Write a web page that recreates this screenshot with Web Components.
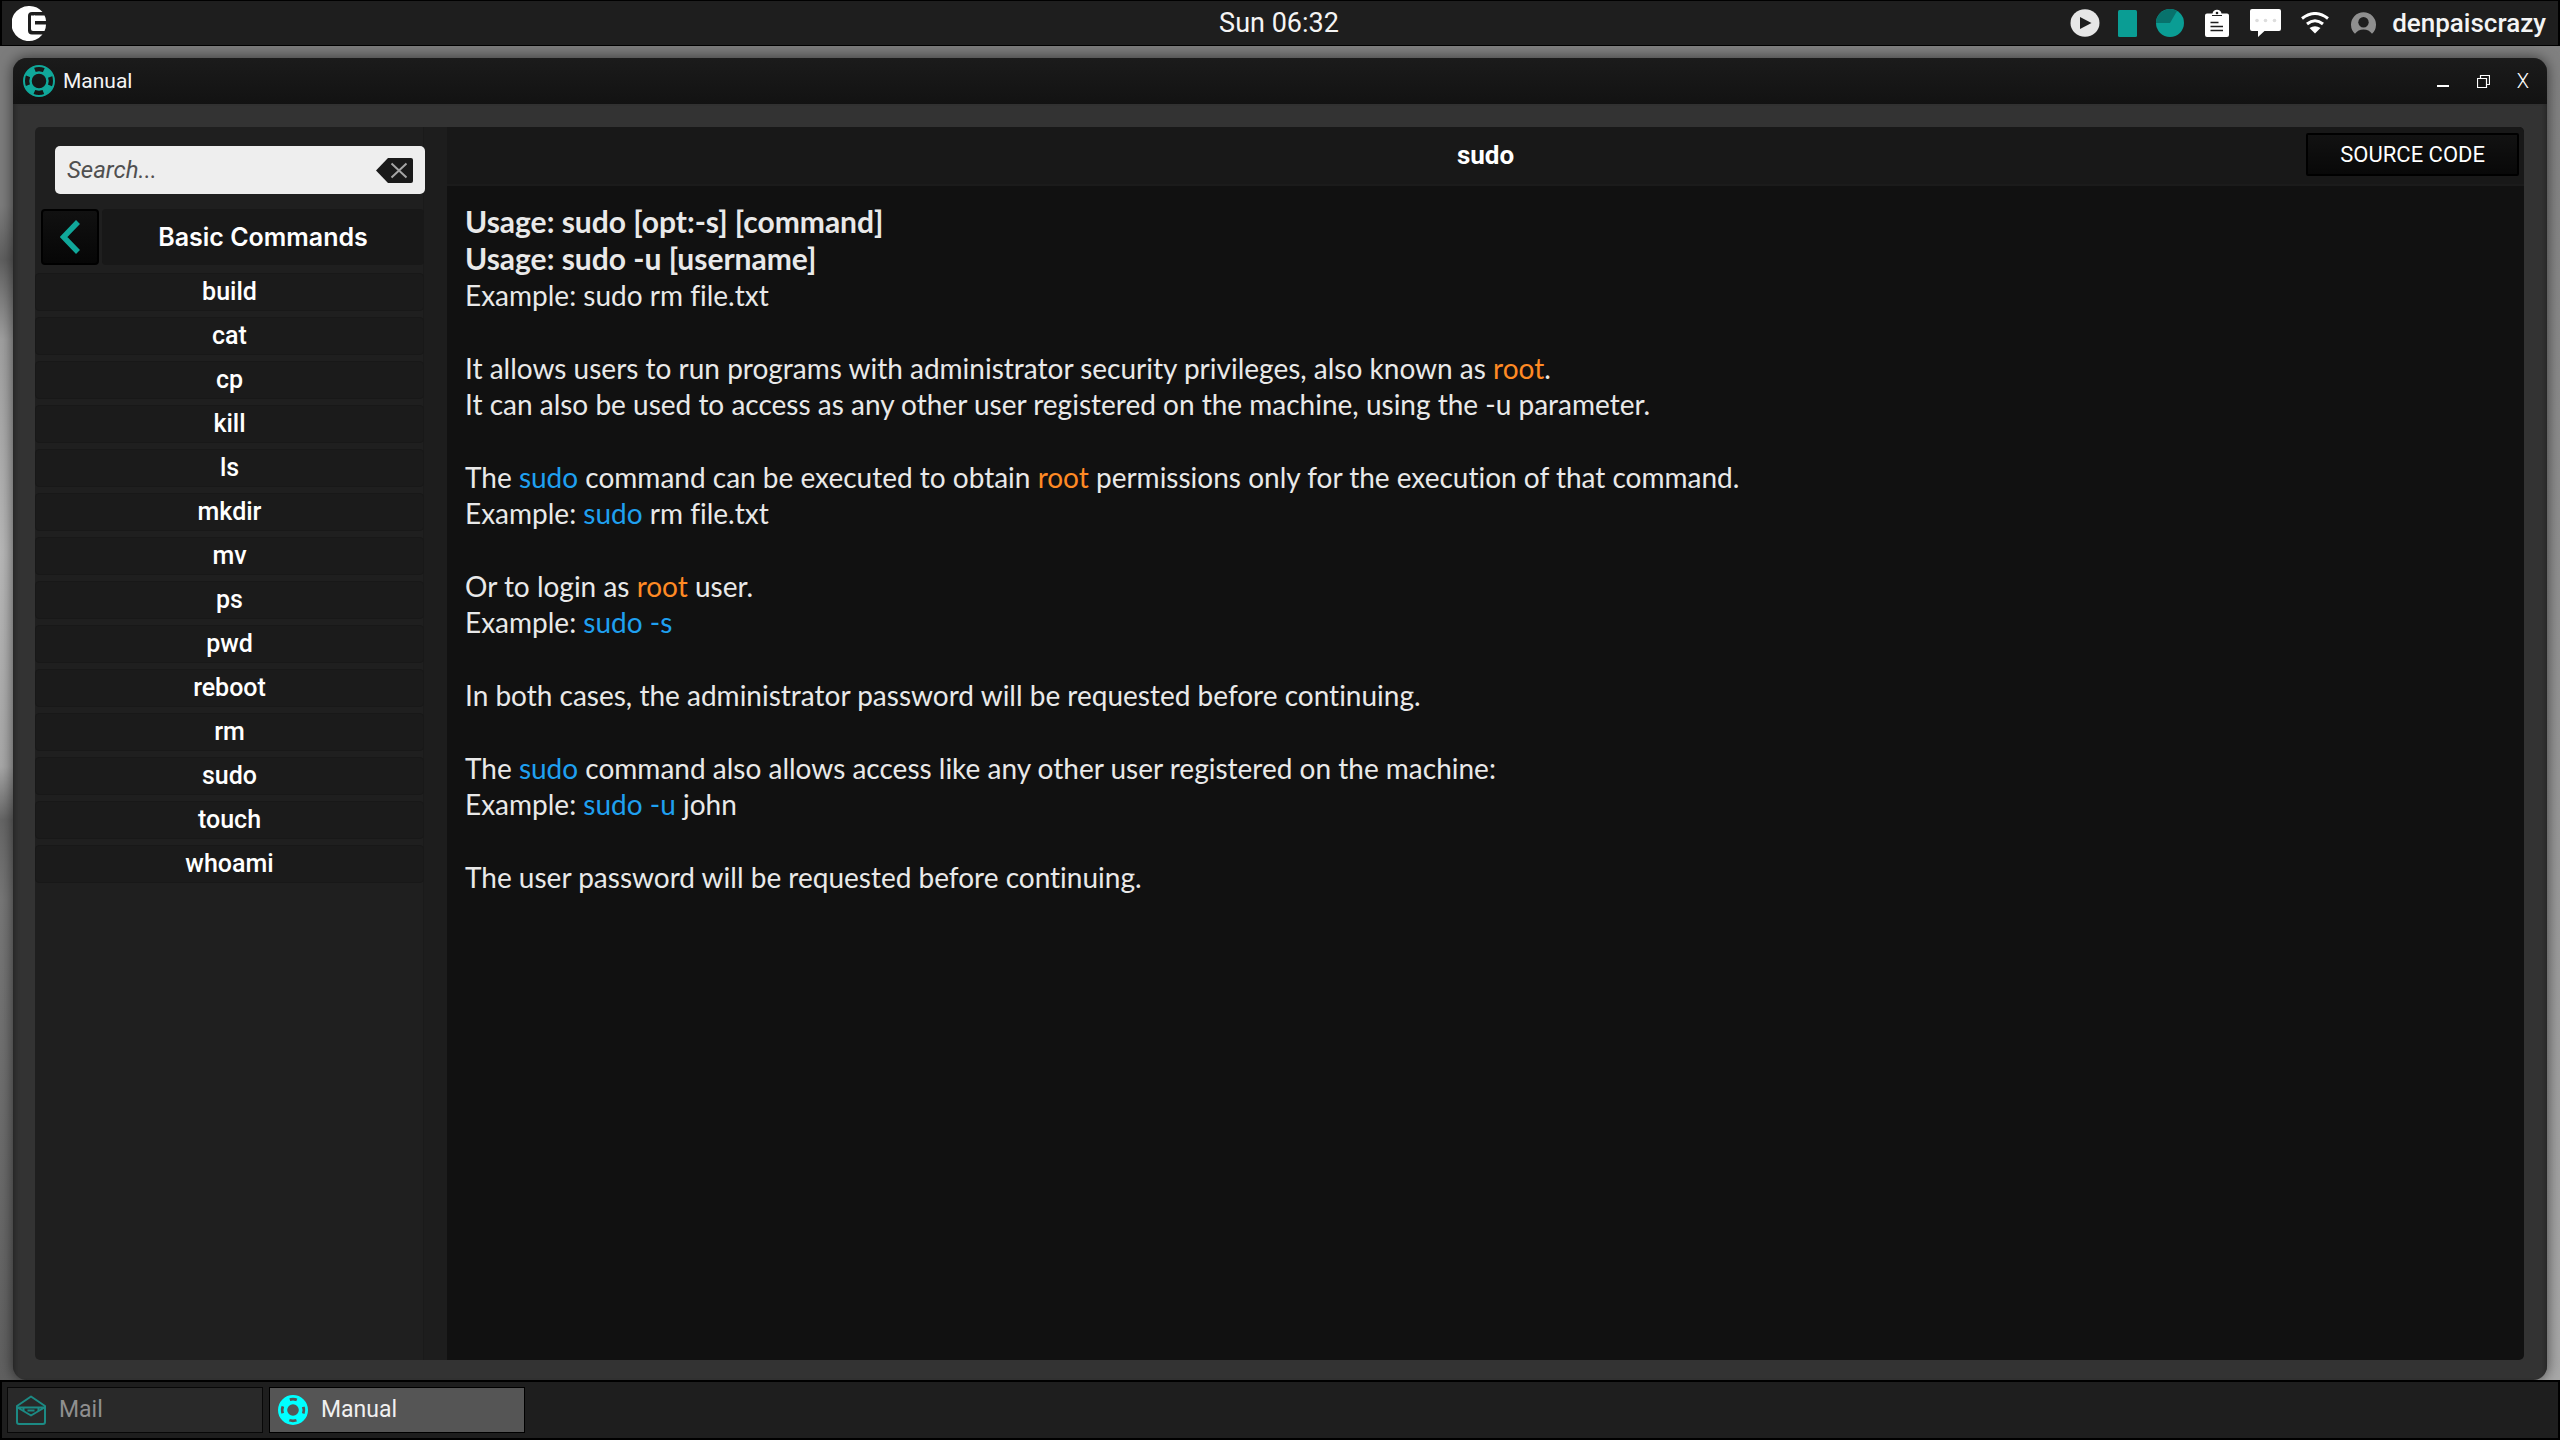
<!DOCTYPE html>
<html lang="en">
<head>
<meta charset="utf-8">
<title>Manual</title>
<style>
  html, body {
    margin: 0;
    height: 100%;
    background: #1e1e1e;
  }
  body {
    font-family: Roboto, "Open Sans", sans-serif;
    color: #f4f4f4;
  }
</style>
</head>
<body>
<os-desktop></os-desktop>

<script>
const define = (name, html, setup) => {
  const template = document.createElement('template');
  template.innerHTML = html;

  customElements.define(name, class extends HTMLElement {
    constructor() {
      super();
      this.attachShadow({ mode: 'open' });
      this.shadowRoot.appendChild(template.content.cloneNode(true));
    }

    connectedCallback() {
      if (setup) setup(this, this.shadowRoot);
    }
  });
};

// Icons, looked up by the name attribute of <os-icon>
const icons = {
  logo: `<svg viewBox="0 0 34 35">
    <path fill="#fff" fill-rule="evenodd" d="M17 0A17.500 17.500 0 1 0 30.500 28.500H20a4 4 0 0 1-4-4V10a4 4 0 0 1 4-4H30.500A17.500 17.500 0 0 0 17 0z"/>
    <path fill="#fff" d="M22 9.500h10.500q1.500 2.500 1.500 5.500H22zM22 18.500h12q0 3.500-1.500 6.500H22z"/>
    <path fill="#fff" d="M19 9.500h4v15.500h-2a2 2 0 0 1-2-2z"/>
  </svg>`,
  ring: `<svg viewBox="0 0 32 32" fill="none" stroke="currentColor">
    <circle cx="16" cy="16" r="15" stroke-width="2"/>
    <circle cx="16" cy="16" r="8.500" stroke-width="2.500"/>
    <circle cx="16" cy="16" r="11.700" stroke-width="6" stroke-dasharray="9.400 8.980" stroke-dashoffset="-4.500"/>
  </svg>`,
  ringsolid: `<svg viewBox="0 0 32 32" fill="none" stroke="currentColor">
    <circle cx="16" cy="16" r="14.500" stroke-width="3"/>
    <circle cx="16" cy="16" r="8.200" stroke-width="4"/>
    <circle cx="16" cy="16" r="11.500" stroke-width="7" stroke-dasharray="10.400 7.660" stroke-dashoffset="-3.830"/>
  </svg>`,
  mail: `<svg viewBox="0 0 30 30" fill="none" stroke="currentColor" stroke-width="2" stroke-linejoin="round">
    <path d="M1 11 15 1.500 29 11V27a2 2 0 0 1-2 2H3a2 2 0 0 1-2-2z"/>
    <path d="M1.500 12.500H28.500L15 20.500z"/>
    <path d="M7.500 13v3M22.500 13v3M11.500 15.500h7"/>
  </svg>`,
  play: `<svg viewBox="0 0 30 28"><ellipse cx="15" cy="14" rx="14.500" ry="13.700" fill="#e6e6e6"/><path fill="#1e1e1e" d="M10 8v12l11.500-6z"/></svg>`,
  battery: `<svg viewBox="0 0 19 27"><rect width="19" height="27" rx="1.500" fill="#0a9d94"/></svg>`,
  disk: `<svg viewBox="0 0 28 28"><circle cx="14" cy="14" r="14" fill="#0a9d94"/><path fill="#08726c" d="M14 14 21 1.900A14 14 0 0 0 0 14z"/></svg>`,
  clipboard: `<svg viewBox="0 0 24 28">
    <path fill="#fff" d="M2 4.500h5.500a4.600 4.600 0 0 1 9 0H22a2 2 0 0 1 2 2V26a2 2 0 0 1-2 2H2a2 2 0 0 1-2-2V6.500a2 2 0 0 1 2-2z"/>
    <path fill="#1e1e1e" d="M7 6h10v1H7z"/><circle cx="12" cy="4" r="1.300" fill="#1e1e1e"/>
    <path stroke="#1e1e1e" stroke-width="1.600" d="M5.500 13.500h8M5.500 17.500h12.500M5.500 21.500h12.500"/>
  </svg>`,
  chat: `<svg viewBox="0 0 31 28"><path fill="#fff" d="M2 0h27a2 2 0 0 1 2 2v18a2 2 0 0 1-2 2H14.500L8 28V22H2a2 2 0 0 1-2-2V2a2 2 0 0 1 2-2z"/>
    <g fill="#ddd"><circle cx="7" cy="11.500" r="1.800"/><circle cx="15.500" cy="11.500" r="1.800"/><circle cx="24.500" cy="11.500" r="1.800"/></g></svg>`,
  wifi: `<svg viewBox="0 0 28 22" fill="none" stroke="#fff" stroke-width="3">
    <path d="M1 6.500Q14-3.500 27 6.500M6 12Q14 5.500 22 12"/>
    <path fill="#fff" stroke="none" d="M8.500 16Q14 12.500 19.500 16L14 21.500z"/>
  </svg>`,
  user: `<svg viewBox="0 0 25 23">
    <path fill="#8f8f8f" d="M4 21.800A12.500 12.500 0 1 1 21 21.800Q18 17.500 12.500 17.500T4 21.800z"/>
    <circle cx="12.500" cy="10.300" r="5.200" fill="#1e1e1e"/>
  </svg>`,
  clear: `<svg viewBox="0 0 37 25"><path fill="#1a1a1a" d="M12 0H35a2 2 0 0 1 2 2V23a2 2 0 0 1-2 2H12L0 12.500z"/><path stroke="#a5a5a5" stroke-width="2" d="M15.500 5.500 30.500 19.500M30.500 5.500 15.500 19.500"/></svg>`,
  back: `<svg viewBox="0 0 20 34" fill="none" stroke="#10a89a" stroke-width="5.500"><path d="M18 2 3.500 17 18 32"/></svg>`,
  minimize: `<svg viewBox="0 0 13 13"><path fill="#fff" d="M0 10h12v2H0z"/></svg>`,
  restore: `<svg viewBox="0 0 13 13" fill="none" stroke="#fff"><path d="M.5 3.500h9v9h-9zM3.500 3V.5h9v9H10" stroke-width="1.200"/></svg>`
};

define('os-icon', `
  <style>
    :host { display: block; flex: none; }
    svg { display: block; width: 100%; height: 100%; }
  </style>
`, (el, root) => {
  root.innerHTML += icons[el.getAttribute('name')];
});

define('tray-bar', `
  <style>
    :host {
      display: grid;
      grid-template-columns: 1fr auto 1fr;
      align-items: center;
      box-sizing: border-box;
      height: 46px;
      padding: 0 12px 0 10px;
      border: solid #000;
      border-width: 1px 2px;
      background: #1e1e1e;
    }
    button {
      justify-self: start;
      padding: 0;
      border: 0;
      background: none;
    }
    time { font-size: 27px; line-height: 32px; }
    .tray { display: flex; align-items: center; justify-self: end; }
    .name { margin-left: 16px; font-size: 26px; line-height: 32px; font-weight: 500; }
    .logo { width: 34px; height: 35px; }
    .play { width: 30px; height: 28px; }
    .battery { width: 19px; height: 27px; margin-left: 18px; }
    .disk { width: 28px; height: 28px; margin-left: 19px; }
    .clipboard { width: 24px; height: 28px; margin-left: 21px; }
    .chat { width: 31px; height: 28px; margin-left: 21px; }
    .wifi { width: 28px; height: 22px; margin-left: 20px; }
    .user { width: 25px; height: 23px; margin-left: 22px; }
  </style>
  <button aria-label="Menu"><os-icon class="logo" name="logo"></os-icon></button>
  <time>Sun 06:32</time>
  <div class="tray">
    <os-icon class="play" name="play"></os-icon>
    <os-icon class="battery" name="battery"></os-icon>
    <os-icon class="disk" name="disk"></os-icon>
    <os-icon class="clipboard" name="clipboard"></os-icon>
    <os-icon class="chat" name="chat"></os-icon>
    <os-icon class="wifi" name="wifi"></os-icon>
    <os-icon class="user" name="user"></os-icon>
    <span class="name">denpaiscrazy</span>
  </div>
`);

define('app-window', `
  <style>
    :host {
      display: flex;
      flex-direction: column;
      box-sizing: border-box;
      border-radius: 14px;
      overflow: hidden;
      background: #333;
      box-shadow: 0 0 14px rgba(0, 0, 0, 0.6);
    }
    header {
      display: flex;
      align-items: center;
      height: 46px;
      padding: 0 18px 0 10px;
      background: linear-gradient(#1b1b1b, #121212);
    }
    .ring { width: 32px; height: 32px; margin-right: 8px; color: #10a89a; }
    h1 { flex: 1; margin: 0; font-size: 21px; line-height: 28px; font-weight: 400; }
    .controls { display: flex; align-items: center; gap: 27px; }
    button {
      padding: 0;
      border: 0;
      background: none;
      color: #fff;
      font: 300 20px/24px Roboto, sans-serif;
    }
    .controls os-icon { width: 13px; height: 13px; }
    .body {
      display: flex;
      flex: 1;
      min-height: 0;
      padding: 23px 23px 20px 22px;
      box-shadow: inset 5px 0 4px -3px #262626, inset -5px 0 4px -3px #262626;
    }
    ::slotted(*) { flex: 1; }
  </style>
  <header>
    <os-icon class="ring" name="ring"></os-icon>
    <h1><slot name="title"></slot></h1>
    <div class="controls">
      <button aria-label="Minimize"><os-icon name="minimize"></os-icon></button>
      <button aria-label="Restore"><os-icon name="restore"></os-icon></button>
      <button aria-label="Close">X</button>
    </div>
  </header>
  <div class="body"><slot></slot></div>
`);

define('command-list', `
  <style>
    :host { display: block; }
    ul {
      display: flex;
      flex-direction: column;
      gap: 6px;
      margin: 0;
      padding: 0;
      list-style: none;
    }
    a {
      display: block;
      padding: 3px 0;
      border: 1px solid #181818;
      border-radius: 4px;
      background: #1b1b1b;
      color: #fff;
      font-size: 25px;
      line-height: 30px;
      font-weight: 500;
      text-align: center;
      text-decoration: none;
    }
  </style>
  <ul></ul>
`, (el, root) => {
  const list = root.querySelector('ul');
  el.getAttribute('commands').split(' ').forEach((command) => {
    const item = document.createElement('li');
    item.innerHTML = `<a href="#${command}">${command}</a>`;
    list.appendChild(item);
  });
});

define('manual-sidebar', `
  <style>
    :host {
      display: flex;
      flex-direction: column;
      box-sizing: border-box;
      padding-right: 23px;
      background: linear-gradient(to left, #1d1d1d 23px, #1a1a1a 23px, #1a1a1a 24px, #1f1f1f 24px);
    }
    .search {
      display: flex;
      align-items: center;
      height: 48px;
      margin: 19px -1px 0 20px;
      padding: 0 12px;
      box-sizing: border-box;
      border-radius: 5px;
      background: #eee;
    }
    input {
      flex: 1;
      min-width: 0;
      padding: 0;
      border: 0;
      outline: 0;
      background: none;
      color: #222;
      font: italic 24px/30px Roboto, sans-serif;
    }
    input::placeholder { color: #505050; opacity: 1; }
    button { padding: 0; border: 0; background: none; }
    .clear { width: 37px; height: 25px; }
    .heading {
      display: flex;
      gap: 3px;
      margin: 15px 0 0 6px;
    }
    .heading button {
      display: grid;
      place-items: center;
      width: 58px;
      height: 56px;
      box-sizing: border-box;
      border: 2px solid #000;
      border-radius: 4px;
      background: linear-gradient(#111, #060606);
    }
    .back { width: 20px; height: 34px; }
    h2 {
      flex: 1;
      margin: 0;
      border-radius: 4px;
      background: #181818;
      color: #fff;
      font: 600 25px/56px Inter, sans-serif;
      text-align: center;
    }
    command-list { margin-top: 8px; }
  </style>
  <div class="search">
    <input type="text" placeholder="Search..." aria-label="Search">
    <button aria-label="Clear"><os-icon class="clear" name="clear"></os-icon></button>
  </div>
  <div class="heading">
    <button aria-label="Back"><os-icon class="back" name="back"></os-icon></button>
    <h2>Basic Commands</h2>
  </div>
  <command-list commands="build cat cp kill ls mkdir mv ps pwd reboot rm sudo touch whoami"></command-list>
`);

define('manual-page', `
  <style>
    :host {
      display: flex;
      flex-direction: column;
      background: #111;
    }
    header {
      display: grid;
      grid-template-columns: 1fr auto 1fr;
      align-items: center;
      height: 59px;
      box-sizing: border-box;
      padding: 0 5px 2px;
      background: #181818;
      border-bottom: 2px solid #1b1b1b;
    }
    h2 { grid-column: 2; margin: 0; color: #fff; font-size: 26px; line-height: 32px; font-weight: 700; }
    button {
      justify-self: end;
      height: 43px;
      padding: 0 32px;
      border: 2px solid #000;
      border-radius: 2px;
      background: linear-gradient(#121212, #080808);
      color: #fff;
      font: 22px/28px Roboto, sans-serif;
    }
    article {
      padding: 17px 18px;
      color: #e9e9e9;
      font-family: Lato, sans-serif;
      font-size: 28px;
      line-height: 36px;
      font-variant-ligatures: none;
    }
    p { margin: 0 0 37px; }
    b { font-size: 30px; line-height: 36px; }
    .cmd { color: #1fa0f0; }
    .root { color: #ff8a24; }
  </style>
  <header>
    <h2>sudo</h2>
    <button>SOURCE CODE</button>
  </header>
  <article>
    <p><b>Usage: sudo [opt:-s] [command]</b><br><b>Usage: sudo -u [username]</b><br>Example: sudo rm file.txt</p>
    <p>It allows users to run programs with administrator security privileges, also known as <span class="root">root</span>.<br>It can also be used to access as any other user registered on the machine, using the -u parameter.</p>
    <p>The <span class="cmd">sudo</span> command can be executed to obtain <span class="root">root</span> permissions only for the execution of that command.<br>Example: <span class="cmd">sudo</span> rm file.txt</p>
    <p>Or to login as <span class="root">root</span> user.<br>Example: <span class="cmd">sudo -s</span></p>
    <p>In both cases, the administrator password will be requested before continuing.</p>
    <p>The <span class="cmd">sudo</span> command also allows access like any other user registered on the machine:<br>Example: <span class="cmd">sudo -u</span> john</p>
    <p>The user password will be requested before continuing.</p>
  </article>
`);

define('manual-app', `
  <style>
    :host {
      display: grid;
      grid-template-columns: 412px 1fr;
      overflow: hidden;
      border-radius: 5px;
    }
  </style>
  <manual-sidebar></manual-sidebar>
  <manual-page></manual-page>
`);

define('task-button', `
  <style>
    :host { display: block; width: 256px; }
    button {
      display: flex;
      align-items: center;
      gap: 13px;
      width: 100%;
      height: 46px;
      padding: 0 8px;
      border: 1px solid #080808;
      background: #292929;
      color: #8f8f8f;
      font: 23px/28px Roboto, sans-serif;
      text-align: left;
    }
    :host([active]) button { background: #555; color: #f0f0f0; border-color: #000; }
    os-icon { width: 30px; height: 30px; color: #1c8a84; }
    :host([active]) os-icon { color: #0ff; }
  </style>
  <button><os-icon></os-icon><slot></slot></button>
`, (el, root) => {
  const icon = document.createElement('os-icon');
  icon.setAttribute('name', el.getAttribute('icon'));
  root.querySelector('os-icon').replaceWith(icon);
});

define('task-bar', `
  <style>
    :host {
      display: flex;
      align-items: center;
      gap: 6px;
      box-sizing: border-box;
      height: 60px;
      padding: 0 5px;
      border: 2px solid #000;
      background: #1e1e1e;
    }
  </style>
  <slot></slot>
`);

define('os-desktop', `
  <style>
    :host {
      display: flex;
      flex-direction: column;
      min-height: 100vh;
    }
    main {
      display: flex;
      flex: 1;
      padding: 12px 13px 0;
      overflow: hidden;
      background:
        linear-gradient(#7c7c7c 12%, #606060 16%, #a0a0a0 22%, #b8b8b8 38%, #a8a8a8 54%, #666 58%, #777 64%, #606060) left / 50% 100% no-repeat,
        linear-gradient(#808080, #a8a8a8) right / 50% 100% no-repeat;
    }
    app-window { flex: 1; }
  </style>
  <tray-bar></tray-bar>
  <main>
    <app-window>
      <span slot="title">Manual</span>
      <manual-app></manual-app>
    </app-window>
  </main>
  <task-bar>
    <task-button icon="mail">Mail</task-button>
    <task-button icon="ringsolid" active>Manual</task-button>
  </task-bar>
`);
</script>
</body>
</html>
